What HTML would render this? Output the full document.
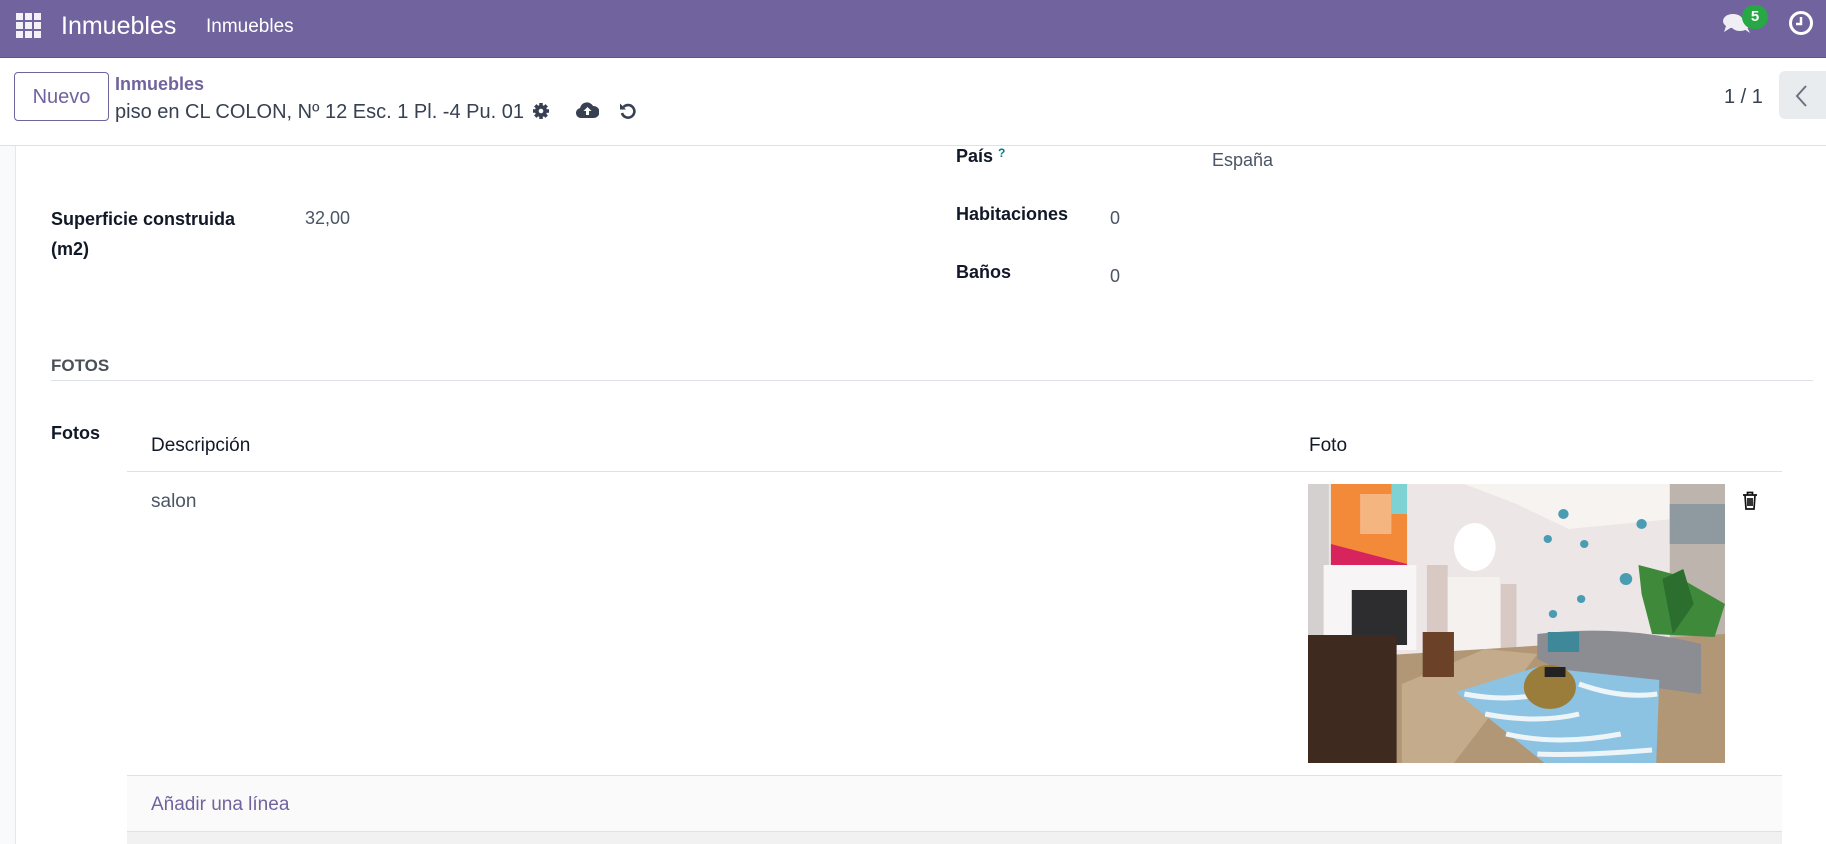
<!DOCTYPE html>
<html><head><meta charset="utf-8"><style>
*{margin:0;padding:0;box-sizing:border-box}
body{width:1826px;height:844px;overflow:hidden;background:#fff;font-family:"Liberation Sans",sans-serif;color:#374151;position:relative}
.a{position:absolute;white-space:nowrap}
.lbl{font-weight:bold;color:#111827;font-size:18px}
.val{font-size:18px;color:#4b5563}
</style></head><body>
<div class="a" style="left:0;top:0;width:1826px;height:58px;background:#71639e;border-bottom:1px solid #5e5288"></div>
<svg class="a" style="left:16px;top:13px" width="26" height="26" viewBox="0 0 26 26" fill="#f3f0f8">
<rect x="0" y="0" width="7" height="7"/><rect x="9" y="0" width="7" height="7"/><rect x="18" y="0" width="7" height="7"/>
<rect x="0" y="9" width="7" height="7"/><rect x="9" y="9" width="7" height="7"/><rect x="18" y="9" width="7" height="7"/>
<rect x="0" y="18" width="7" height="7"/><rect x="9" y="18" width="7" height="7"/><rect x="18" y="18" width="7" height="7"/></svg>
<div class="a" style="left:61px;top:12px;font-size:25px;color:#fff">Inmuebles</div>
<div class="a" style="left:206px;top:16px;font-size:19px;color:#fff">Inmuebles</div>
<svg class="a" style="left:1722px;top:10px" width="32" height="26" viewBox="0 0 32 26" fill="#f0eef5"><ellipse cx="11" cy="11" rx="10" ry="7"/><path d="M4 16 L2 22 L10 17Z"/><ellipse cx="18" cy="15" rx="9" ry="6"/><path d="M22 19 L28 23 L25 17Z"/></svg>
<div class="a" style="left:1742px;top:5px;width:26px;height:24px;border-radius:12px;background:#28a745;color:#fff;font-weight:bold;font-size:15px;text-align:center;line-height:24px">5</div>
<svg class="a" style="left:1788px;top:10px" width="26" height="26" viewBox="0 0 26 26"><circle cx="13" cy="13" r="10.5" fill="none" stroke="#fff" stroke-width="3"/><path d="M13 7v7h-5" fill="none" stroke="#fff" stroke-width="2.5"/></svg>

<div class="a" style="left:14px;top:72px;width:95px;height:49px;border:1px solid #71639e;border-radius:4px;color:#71639e;font-size:20px;text-align:center;line-height:49px">Nuevo</div>
<div class="a" style="left:115px;top:74px;font-size:18px;font-weight:bold;color:#71639e">Inmuebles</div>
<div class="a" style="left:115px;top:101px;font-size:20px;color:#374151">piso en CL COLON, Nº 12 Esc. 1 Pl. -4 Pu. 01</div>
<svg class="a" style="left:532px;top:102px" width="18" height="18" viewBox="0 0 18 18" fill="#374151"><circle cx="9" cy="9" r="6"/><g stroke="#374151" stroke-width="3.5"><path d="M9 1v16M1 9h16M3.3 3.3l11.4 11.4M14.7 3.3L3.3 14.7"/></g><circle cx="9" cy="9" r="2.3" fill="#fff"/></svg>
<svg class="a" style="left:576px;top:101px" width="23" height="18" viewBox="0 0 23 18" fill="#374151"><path d="M5 17a5 5 0 0 1-1-9.9A7 7 0 0 1 17 5a5.5 5.5 0 0 1 1 12z"/><path d="M11.5 6l-4 4h2.5v4h3v-4h2.5z" fill="#fff"/></svg>
<svg class="a" style="left:619px;top:102px" width="18" height="18" viewBox="0 0 18 18"><path d="M4.5 5A6.3 6.3 0 1 1 3 11" fill="none" stroke="#374151" stroke-width="2.6"/><path d="M1 1.5v6h6z" fill="#374151"/></svg>
<div class="a" style="left:1724px;top:86px;font-size:20px;color:#374151">1 / 1</div>
<div class="a" style="left:1779px;top:71px;width:47px;height:48px;background:#e9ecef;border-radius:6px 0 0 6px"></div>
<svg class="a" style="left:1794px;top:84px" width="14" height="24" viewBox="0 0 14 24"><path d="M12 2L3 12l9 10" fill="none" stroke="#6b7280" stroke-width="2"/></svg>
<div class="a" style="left:0;top:145px;width:1826px;height:1px;background:#dee2e6"></div>

<div class="a" style="left:0;top:146px;width:16px;height:698px;background:#f9fafb;border-right:1px solid #e5e7eb"></div>

<div class="a lbl" style="left:956px;top:146px">País <span style="color:#017e84;font-size:12px;vertical-align:top">?</span></div>
<div class="a val" style="left:1212px;top:150px">España</div>
<div class="a lbl" style="left:51px;top:204px;line-height:30px">Superficie construida<br>(m2)</div>
<div class="a val" style="left:305px;top:208px">32,00</div>
<div class="a lbl" style="left:956px;top:204px">Habitaciones</div>
<div class="a val" style="left:1110px;top:208px">0</div>
<div class="a lbl" style="left:956px;top:262px">Baños</div>
<div class="a val" style="left:1110px;top:266px">0</div>

<div class="a" style="left:51px;top:356px;font-size:17px;font-weight:bold;color:#495057">FOTOS</div>
<div class="a" style="left:51px;top:380px;width:1762px;height:1px;background:#dee2e6"></div>
<div class="a lbl" style="left:51px;top:423px">Fotos</div>

<div class="a" style="left:151px;top:435px;font-size:19px;color:#111827">Descripción</div>
<div class="a" style="left:1309px;top:435px;font-size:19px;color:#111827">Foto</div>
<div class="a" style="left:127px;top:471px;width:1655px;height:1px;background:#dee2e6"></div>
<div class="a" style="left:151px;top:491px;font-size:19px;color:#4b5563">salon</div>

<svg class="a" style="left:1308px;top:484px" width="417" height="279" viewBox="0 0 400 279" preserveAspectRatio="none">
<rect width="400" height="279" fill="#ece6e6"/>
<polygon points="150,0 400,0 400,30 250,45 200,20" fill="#f6f3f0"/>
<rect x="347" y="0" width="53" height="279" fill="#bdb4ad"/>
<rect x="347" y="20" width="53" height="40" fill="#8f9aa0"/>
<rect x="0" y="0" width="20" height="160" fill="#d4d0cf"/>
<rect x="22" y="0" width="73" height="103" fill="#f38a3a"/>
<polygon points="22,60 95,80 95,103 22,103" fill="#d8245d"/>
<rect x="50" y="10" width="30" height="40" fill="#f4c7a0" opacity=".7"/>
<rect x="80" y="0" width="15" height="30" fill="#7fd2d3"/>
<rect x="15" y="81" width="89" height="85" fill="#f7f5f5"/>
<rect x="42" y="106" width="53" height="55" fill="#2d2d2f"/>
<ellipse cx="160" cy="63" rx="20" ry="24" fill="#fff"/>
<rect x="114" y="81" width="20" height="95" fill="#d8c9c4"/>
<rect x="185" y="100" width="15" height="70" fill="#d8c9c4"/>
<rect x="134" y="93" width="50" height="83" fill="#f4f1ee"/>
<polygon points="0,176 400,150 400,279 0,279" fill="#b29777"/>
<polygon points="90,200 170,165 220,170 140,279 90,279" fill="#c4ab8b"/>
<rect x="110" y="148" width="30" height="45" fill="#6b4227"/>
<rect x="0" y="151" width="85" height="128" fill="#3e2a1f"/>
<polygon points="317,81 350,90 400,120 390,153 330,150 320,110" fill="#3e8a3a"/>
<polygon points="340,95 360,85 370,120 350,150" fill="#2b6e2e"/>
<path d="M220 150 Q300 140 377 160 L377 210 Q300 200 240 185 L220 175Z" fill="#8b8d92"/>
<rect x="230" y="148" width="30" height="20" fill="#3e8899"/>
<polygon points="142,208 220,183 337,196 334,279 227,279" fill="#8cc3e3"/>
<path d="M150 210 Q200 220 240 205 M170 230 Q220 240 260 230 M190 250 Q240 262 300 250 M220 270 Q260 272 330 266 M260 200 Q300 215 335 210" stroke="#eef5f9" stroke-width="5" fill="none"/>
<ellipse cx="232" cy="203" rx="25" ry="22" fill="#9b7d3b"/>
<rect x="227" y="183" width="20" height="10" fill="#222"/>
<circle cx="245" cy="30" r="5" fill="#4a9cb3"/><circle cx="320" cy="40" r="5" fill="#4a9cb3"/><circle cx="305" cy="95" r="6" fill="#4a9cb3"/><circle cx="265" cy="60" r="4" fill="#4a9cb3"/><circle cx="230" cy="55" r="4" fill="#4a9cb3"/><circle cx="262" cy="115" r="4" fill="#4a9cb3"/><circle cx="235" cy="130" r="4" fill="#4a9cb3"/>
</svg>
<svg class="a" style="left:1742px;top:491px" width="16" height="19" viewBox="0 0 16 19" fill="none" stroke="#111" stroke-width="1.7"><path d="M1 4h14M5.5 4V1.5h5V4M3 4l1 14h8l1-14M6 7v8M8 7v8M10 7v8"/></svg>

<div class="a" style="left:127px;top:775px;width:1655px;height:1px;background:#dee2e6"></div>
<div class="a" style="left:127px;top:776px;width:1655px;height:55px;background:#fafafa"></div>
<div class="a" style="left:151px;top:794px;font-size:19px;color:#71639e">Añadir una línea</div>
<div class="a" style="left:127px;top:831px;width:1655px;height:1px;background:#dee2e6"></div>
<div class="a" style="left:127px;top:832px;width:1655px;height:12px;background:#f1f1f1"></div>
</body></html>
